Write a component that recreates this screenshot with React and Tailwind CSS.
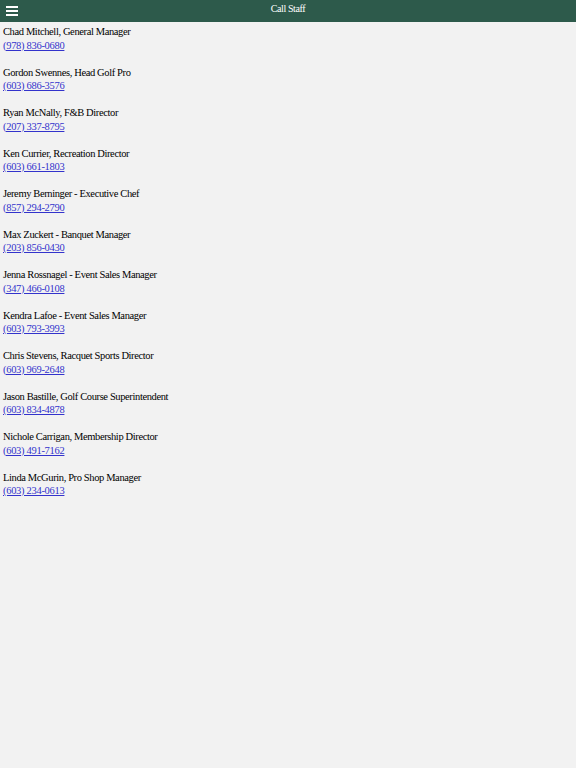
export default function App() {
  const staff = [
    ["Chad Mitchell, General Manager", "(978) 836-0680"],
    ["Gordon Swennes, Head Golf Pro", "(603) 686-3576"],
    ["Ryan McNally, F&B Director", "(207) 337-8795"],
    ["Ken Currier, Recreation Director", "(603) 661-1803"],
    ["Jeremy Berninger - Executive Chef", "(857) 294-2790"],
    ["Max Zuckert - Banquet Manager", "(203) 856-0430"],
    ["Jenna Rossnagel - Event Sales Manager", "(347) 466-0108"],
    ["Kendra Lafoe - Event Sales Manager", "(603) 793-3993"],
    ["Chris Stevens, Racquet Sports Director", "(603) 969-2648"],
    ["Jason Bastille, Golf Course Superintendent", "(603) 834-4878"],
    ["Nichole Carrigan, Membership Director", "(603) 491-7162"],
    ["Linda McGurin, Pro Shop Manager", "(603) 234-0613"],
  ];
  return (
    <div className="min-h-[768px] bg-[#f2f2f2] font-['Liberation_Serif',serif] text-black">
      <div className="h-[22px] bg-[#2d5a4b] relative flex justify-center">
        <svg className="absolute left-[6px] top-[6px]" width="12" height="10" viewBox="0 0 12 10">
          <rect x="0" y="0" width="12" height="2" fill="#fff" />
          <rect x="0" y="4" width="12" height="2" fill="#fff" />
          <rect x="0" y="8" width="12" height="2" fill="#fff" />
        </svg>
        <span className="text-white text-[10px] leading-[18px] tracking-[-0.4px]">Call Staff</span>
      </div>
      <div className="px-[3px] pt-[3px] text-[10.5px] leading-[13.5px] tracking-[-0.38px]">
        {staff.map(([n, p]) => (
          <div key={n} className="pb-[13.5px]">
            <div>{n}</div>
            <a href="#" className="text-[#3333cc] underline block w-fit tracking-[-0.3px]">{p}</a>
          </div>
        ))}
      </div>
    </div>
  );
}
